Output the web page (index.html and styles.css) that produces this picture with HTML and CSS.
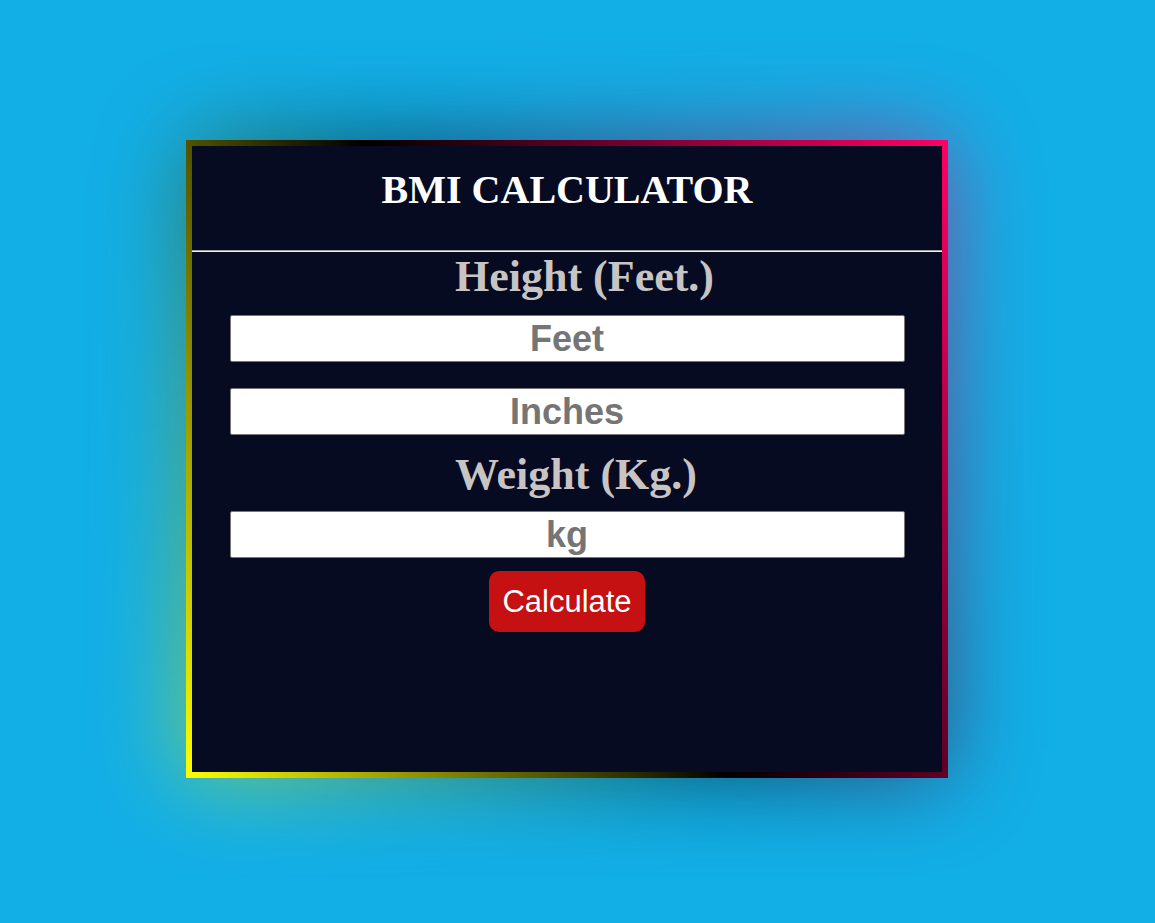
FILE: index.html
```html
<!DOCTYPE html>
<html lang="en">
<head>
<meta charset="utf-8">
<title>BMI Calculator</title>
<link rel="stylesheet" href="styles.css">
</head>
<body>
  <div class="card">
    <div class="card-head">
      <h1 class="title">BMI CALCULATOR</h1>
    </div>
    <div class="divider"></div>
    <div class="card-body">
      <h2 class="label">Height (Feet.)</h2>
      <input class="field field-first" type="text" placeholder="Feet">
      <input class="field field-second" type="text" placeholder="Inches">
      <h2 class="label label-weight">Weight (Kg.)</h2>
      <input class="field field-kg" type="text" placeholder="kg">
      <button class="btn" type="button">Calculate</button>
    </div>
  </div>
</body>
</html>
```
FILE: styles.css
```css
html, body {
  margin: 0;
  padding: 0;
}

body {
  background: #12aee6;
  min-height: 923px;
  font-family: "Liberation Serif", "Times New Roman", serif;
  overflow: hidden;
}

.card {
  position: relative;
  box-sizing: border-box;
  width: 762px;
  height: 638px;
  margin: 140px 0 0 186px;
  border: 6px solid transparent;
  background:
    linear-gradient(#060b21, #060b21) padding-box,
    linear-gradient(60deg, #ffff00 0%, #000000 48%, #ff0066 100%) border-box;
  display: flex;
  flex-direction: column;
}

.card::before {
  content: "";
  position: absolute;
  inset: -6px;
  background: linear-gradient(60deg, #ffff00 0%, #000000 48%, #ff0066 100%);
  filter: blur(45px);
  opacity: 0.55;
  z-index: -1;
}

.card-head {
  height: 104px;
  display: flex;
  justify-content: center;
  align-items: flex-start;
}

.title {
  margin: 20px 0 0;
  font-size: 40px;
  font-weight: bold;
  color: #ffffff;
  line-height: normal;
}

.divider {
  height: 0;
  border-top: 1px solid #a0a0a0;
  border-bottom: 1px solid #f2f2f2;
}

.card-body {
  display: flex;
  flex-direction: column;
  align-items: center;
}

.label {
  align-self: stretch;
  margin: 0;
  padding-left: 263px;
  font-size: 44px;
  font-weight: bold;
  line-height: 49px;
  color: #c8c4c4;
  text-align: left;
}

.label-weight {
  margin-top: 15px;
}

.field {
  box-sizing: border-box;
  width: 675px;
  height: 47px;
  margin: 0;
  padding: 0 2px;
  border: 1px solid #767676;
  border-radius: 2px;
  background: #ffffff;
  font-family: "Liberation Sans", Arial, sans-serif;
  font-size: 36px;
  font-weight: bold;
  color: #333;
  text-align: center;
}

.field::placeholder {
  color: #757575;
  opacity: 1;
}

.field-first {
  margin-top: 14px;
}

.field-second {
  margin-top: 26px;
}

.field-kg {
  margin-top: 12px;
}

.btn {
  margin-top: 13px;
  height: 61px;
  padding: 0 13px;
  border: none;
  border-radius: 10px;
  background: #c51111;
  color: #ffffff;
  font-family: "Liberation Sans", Arial, sans-serif;
  font-size: 31px;
  line-height: 61px;
}
```
